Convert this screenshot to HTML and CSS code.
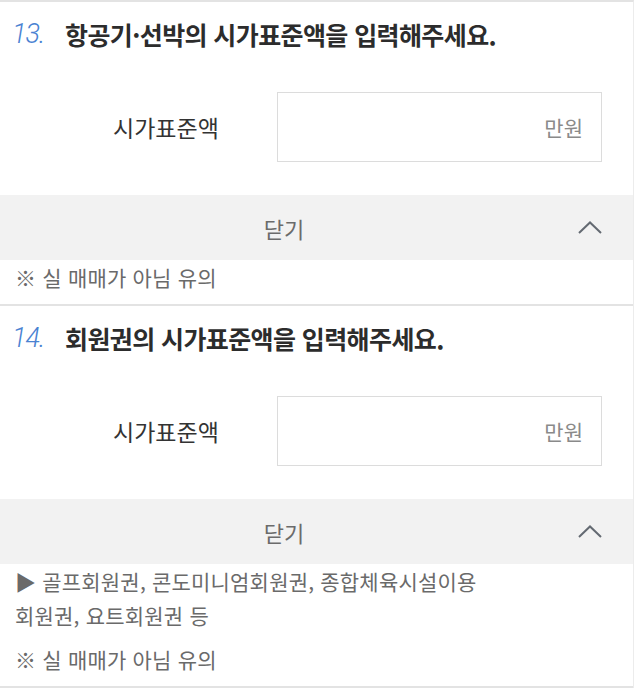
FILE: index.html
```html
<!DOCTYPE html>
<html lang="ko">
<head>
<meta charset="utf-8">
<title>시가표준액 입력</title>
<link rel="stylesheet" href="styles.css">
</head>
<body>
<div class="list">
  <section class="q">
    <h2 class="q-title"><span class="q-num">13.</span><span class="q-text">항공기·선박의 시가표준액을 입력해주세요.</span></h2>
    <div class="q-row">
      <label class="q-label">시가표준액</label>
      <div class="q-input"><span class="q-unit">만원</span></div>
    </div>
    <div class="q-toggle">
      <span class="q-toggle-text">닫기</span>
      <svg class="q-chevron" width="24" height="13" viewBox="0 0 24 13"><polyline points="1,12 12,1.5 23,12" fill="none" stroke="#646a72" stroke-width="2"/></svg>
    </div>
    <div class="q-notes">
      <p class="q-note">※ 실 매매가 아님 유의</p>
    </div>
  </section>
  <section class="q">
    <h2 class="q-title"><span class="q-num">14.</span><span class="q-text">회원권의 시가표준액을 입력해주세요.</span></h2>
    <div class="q-row">
      <label class="q-label">시가표준액</label>
      <div class="q-input"><span class="q-unit">만원</span></div>
    </div>
    <div class="q-toggle">
      <span class="q-toggle-text">닫기</span>
      <svg class="q-chevron" width="24" height="13" viewBox="0 0 24 13"><polyline points="1,12 12,1.5 23,12" fill="none" stroke="#646a72" stroke-width="2"/></svg>
    </div>
    <div class="q-notes">
      <p class="q-note">▶ 골프회원권, 콘도미니엄회원권, 종합체육시설이용<br>회원권, 요트회원권 등</p>
      <p class="q-note">※ 실 매매가 아님 유의</p>
    </div>
  </section>
</div>
</body>
</html>
```

FILE: styles.css
```css
* { box-sizing: border-box; }
html, body {
  margin: 0;
  padding: 0;
  background: #ffffff;
}
body {
  font-family: "Noto Sans CJK KR", "Noto Sans", sans-serif;
  color: #333;
}
.list {
  width: 634px;
  border-top: 2px solid #e3e3e3;
  border-right: 1px solid #ececec;
}
.q {
  border-bottom: 2px solid #e3e3e3;
}
.q-title {
  margin: 0;
  padding: 17px 0 0 12px;
  display: flex;
  align-items: center;
  height: 47px;
  line-height: 30px;
  font-weight: 700;
  font-size: 25px;
  color: #2c2c2c;
}
.q-num {
  width: 53px;
  font-family: Roboto, "Liberation Sans", sans-serif;
  font-style: italic;
  font-weight: 300;
  font-size: 27px;
  color: #4a82d2;
  letter-spacing: -1px;
}
.q-text {
  letter-spacing: -0.6px;
}
.q-row {
  display: flex;
  align-items: center;
  margin-top: 43px;
}
.q-label {
  margin-left: 113px;
  width: 164px;
  font-size: 23px;
  line-height: 30px;
  color: #333;
}
.q-input {
  width: 325px;
  height: 70px;
  border: 1px solid #dcdcdc;
  display: flex;
  align-items: center;
  justify-content: flex-end;
  padding-right: 18px;
}
.q-unit {
  font-size: 21px;
  color: #8a8a8a;
}
.q-toggle {
  margin-top: 33px;
  height: 65px;
  background: #f2f2f2;
  display: flex;
  align-items: center;
}
.q-toggle-text {
  flex: 1;
  text-align: center;
  padding-right: 10px;
  font-size: 22px;
  color: #6b6b6b;
}
.q-chevron {
  display: block;
  margin-right: 31px;
}
.q-notes {
  padding: 0 15px 10px;
}
.q-note {
  margin: 0;
  font-size: 21px;
  line-height: 34px;
  letter-spacing: 0.2px;
  color: #6a6a6a;
}
.q-note + .q-note {
  margin-top: 10px;
}
```
